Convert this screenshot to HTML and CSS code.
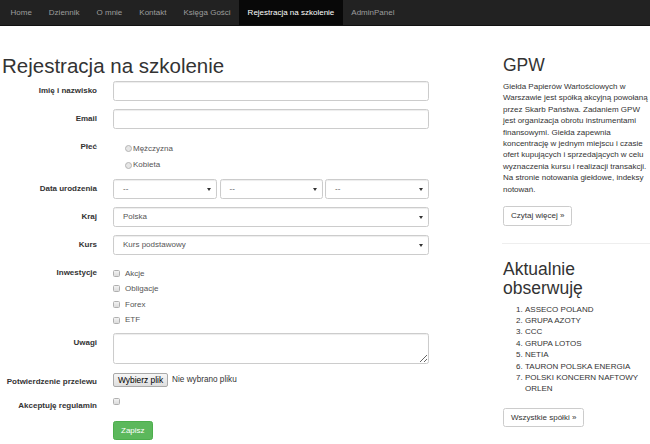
FILE: index.html
```html
<!DOCTYPE html>
<html lang="pl">
<head>
<meta charset="utf-8">
<title>Rejestracja na szkolenie</title>
<link rel="stylesheet" href="styles.css">
</head>
<body>
<nav class="navbar">
  <ul class="nav">
    <li><a href="#">Home</a></li>
    <li><a href="#">Dziennik</a></li>
    <li><a href="#">O mnie</a></li>
    <li><a href="#">Kontakt</a></li>
    <li><a href="#">Księga Gości</a></li>
    <li class="active"><a href="#">Rejestracja na szkolenie</a></li>
    <li><a href="#">AdminPanel</a></li>
  </ul>
</nav>
<div class="page">
  <main class="main">
    <h1 class="title">Rejestracja na szkolenie</h1>
    <form class="form">
      <div class="row">
        <label class="lbl">Imię i nazwisko</label>
        <input class="ctrl" type="text">
      </div>
      <div class="row">
        <label class="lbl">Email</label>
        <input class="ctrl" type="text">
      </div>
      <div class="row row-tight">
        <label class="lbl">Płeć</label>
        <div class="radios">
          <div class="radio"><span class="rdot"></span>Mężczyzna</div>
          <div class="radio"><span class="rdot"></span>Kobieta</div>
        </div>
      </div>
      <div class="row">
        <label class="lbl">Data urodzenia</label>
        <div class="dates">
          <div class="sel"><span class="sel-text">--</span></div>
          <div class="sel"><span class="sel-text">--</span></div>
          <div class="sel"><span class="sel-text">--</span></div>
        </div>
      </div>
      <div class="row">
        <label class="lbl">Kraj</label>
        <div class="sel"><span class="sel-text">Polska</span></div>
      </div>
      <div class="row">
        <label class="lbl">Kurs</label>
        <div class="sel"><span class="sel-text">Kurs podstawowy</span></div>
      </div>
      <div class="row row-tight">
        <label class="lbl">Inwestycje</label>
        <div class="checks">
          <div class="check"><span class="cbox"></span>Akcje</div>
          <div class="check"><span class="cbox"></span>Obligacje</div>
          <div class="check"><span class="cbox"></span>Forex</div>
          <div class="check"><span class="cbox"></span>ETF</div>
        </div>
      </div>
      <div class="row">
        <label class="lbl">Uwagi</label>
        <textarea class="ctrl area"></textarea>
      </div>
      <div class="row row-file">
        <label class="lbl">Potwierdzenie przelewu</label>
        <div class="file"><span class="file-btn">Wybierz plik</span><span class="file-name">Nie wybrano pliku</span></div>
      </div>
      <div class="row row-accept">
        <label class="lbl">Akceptuję regulamin</label>
        <div><span class="cbox cbox-solo"></span></div>
      </div>
      <div class="row">
        <span></span>
        <div><button type="button" class="btn-success">Zapisz</button></div>
      </div>
    </form>
  </main>
  <aside class="side">
    <h2 class="side-title">GPW</h2>
    <p class="side-text">Giełda Papierów Wartościowych w Warszawie jest spółką akcyjną powołaną przez Skarb Państwa. Zadaniem GPW jest organizacja obrotu instrumentami finansowymi. Giełda zapewnia koncentrację w jednym miejscu i czasie ofert kupujących i sprzedających w celu wyznaczenia kursu i realizacji transakcji. Na stronie notowania giełdowe, indeksy notowań.</p>
    <a class="btn-default" href="#">Czytaj więcej »</a>
    <hr class="sep">
    <h2 class="side-title second">Aktualnie obserwuję</h2>
    <ol class="watch">
      <li>ASSECO POLAND</li>
      <li>GRUPA AZOTY</li>
      <li>CCC</li>
      <li>GRUPA LOTOS</li>
      <li>NETIA</li>
      <li>TAURON POLSKA ENERGIA</li>
      <li>POLSKI KONCERN NAFTOWY ORLEN</li>
    </ol>
    <a class="btn-default" href="#">Wszystkie spółki »</a>
  </aside>
</div>
</body>
</html>
```
FILE: styles.css
```css
* { box-sizing: border-box; }
html, body { margin: 0; padding: 0; }
body {
  font-family: "Liberation Sans", Arial, sans-serif;
  font-size: 8px;
  line-height: 11.4px;
  color: #333;
  background: #fff;
  overflow: hidden;
}
.navbar {
  height: 26px;
  background: #222;
  border-bottom: 1px solid #111;
}
.nav {
  list-style: none;
  margin: 0;
  padding: 0 0 0 2px;
  display: flex;
  height: 25px;
}
.nav li a {
  display: block;
  padding: 0 8.5px;
  line-height: 25px;
  color: #9d9d9d;
  text-decoration: none;
}
.nav li.active a {
  background: #080808;
  color: #fff;
}
.page {
  display: grid;
  grid-template-columns: 490px 147px;
  column-gap: 13px;
}
.main { padding: 29px 0 0 2px; }
.title {
  font-size: 20.5px;
  font-weight: 400;
  line-height: 22.5px;
  margin: 0 0 3px;
  color: #333;
}
.form { display: flex; flex-direction: column; }
.row {
  display: grid;
  grid-template-columns: 95px 316px;
  column-gap: 16px;
  margin-bottom: 8px;
  align-items: start;
}
.row-tight { margin-bottom: 5px; }
.lbl {
  text-align: right;
  font-weight: 700;
  padding-top: 4px;
}
.ctrl {
  display: block;
  width: 316px;
  height: 20px;
  border: 1px solid #ccc;
  border-radius: 2.5px;
  box-shadow: inset 0 1px 1px rgba(0,0,0,.075);
  background: #fff;
  font: inherit;
  padding: 2px 7px;
  margin: 0;
}
.area { height: 31px; resize: vertical; }
.radios { padding-top: 4px; }
.radio {
  height: 16.5px;
  line-height: 16.5px;
  display: flex;
  align-items: center;
  padding-left: 12px;
  color: #555;
}
.rdot {
  width: 7px;
  height: 7px;
  border-radius: 50%;
  border: 1px solid #b5b5b5;
  background: #e6e6e6;
  margin-right: 1px;
}
.dates {
  display: grid;
  grid-template-columns: 104px 103px 104px;
  column-gap: 2.5px;
}
.sel {
  position: relative;
  height: 20px;
  border: 1px solid #ccc;
  border-radius: 2.5px;
  box-shadow: inset 0 1px 1px rgba(0,0,0,.075);
  background: #fff;
  padding-left: 9px;
  line-height: 18px;
  color: #555;
}
.sel::after {
  content: "";
  position: absolute;
  right: 5px;
  top: 8px;
  border-left: 2px solid transparent;
  border-right: 2px solid transparent;
  border-top: 3px solid #333;
}
.checks { display: flex; flex-direction: column; padding-top: 3px; }
.check {
  height: 15.6px;
  display: flex;
  align-items: center;
  color: #555;
}
.cbox {
  display: inline-block;
  width: 7px;
  height: 7px;
  border: 1px solid #b0b0b0;
  border-radius: 1.5px;
  background: linear-gradient(#f2f2f2, #dcdcdc);
  margin-right: 5px;
}
.cbox-solo { margin-top: 2.5px; }
.row-file { height: 16px; }
.file {
  display: flex;
  align-items: center;
  padding-top: 1px;
  color: #333;
}
.file-btn {
  height: 14px;
  line-height: 12px;
  padding: 0 4px;
  border: 1px solid #a9a9a9;
  border-radius: 2px;
  background: linear-gradient(#f6f6f6, #dedede);
  color: #000;
  font-size: 8.4px;
  margin-right: 4px;
}
.file-name { font-size: 8.2px; }
.row-accept { min-height: 17px; }
.btn-success {
  height: 19.5px;
  padding: 0 7px;
  border: 1px solid #4cae4c;
  border-radius: 2.5px;
  background: #5cb85c;
  color: #fff;
  font: inherit;
  line-height: 17px;
}
.side { padding-top: 30px; }
.side-title {
  font-size: 17.5px;
  font-weight: 400;
  line-height: 19px;
  margin: 0 0 6px;
  color: #333;
}
.side-text { margin: 0 0 11px; }
.btn-default {
  display: inline-block;
  height: 19.5px;
  line-height: 17.5px;
  padding: 0 7px;
  border: 1px solid #ccc;
  border-radius: 2.5px;
  color: #333;
  text-decoration: none;
  background: #fff;
}
.sep {
  border: 0;
  border-top: 1px solid #eee;
  margin: 17px -2px 16px -1px;
}
.second { margin-bottom: 6px; }
.watch {
  margin: 0 0 13px;
  padding-left: 22px;
}
```
